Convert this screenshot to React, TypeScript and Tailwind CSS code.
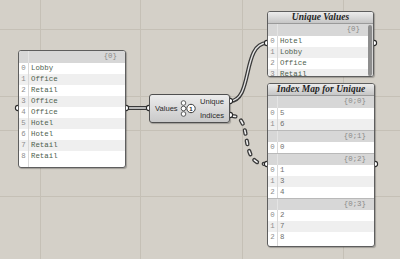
import React from "react";

type Group = { path: string; items: string[] };

const mono = "font-['Liberation_Mono','DejaVu_Sans_Mono',monospace]";

function Row({ i, v, odd, numeric }: { i: number; v: string; odd: boolean; numeric?: boolean }) {
  return (
    <div className={`flex h-[11px] shrink-0 items-center ${odd ? "bg-[#efefef]" : "bg-white"}`}>
      <div className="w-[10px] h-full border-r border-[#d9d9d9] text-[#8d8d8d] flex items-center justify-center">
        {i}
      </div>
      <div className={`pl-[2px] ${numeric ? "text-[#6f6f6f]" : "text-[#4e614e]"}`}>{v}</div>
    </div>
  );
}

function PathHeader({ path, first }: { path: string; first?: boolean }) {
  return (
    <div
      className={`flex h-[12px] shrink-0 items-center bg-[#d7d7d7] ${first ? "" : "border-t border-[#b9b9b9]"}`}
    >
      <div className="w-[10px] h-full border-r border-[#e4e4e4]" />
      <div className="flex-1 text-right pr-[8px] text-[#8a8a8a]">{path}</div>
    </div>
  );
}

function Panel({
  className,
  title,
  groups,
  numeric,
  scroll,
}: {
  className: string;
  title?: string;
  groups: Group[];
  numeric?: boolean;
  scroll?: boolean;
}) {
  return (
    <div
      className={`absolute flex flex-col overflow-hidden rounded-[3px] border border-[#5e5e5e] bg-white shadow-[1px_1px_1px_rgba(0,0,0,0.25)] ${className}`}
    >
      {title && (
        <div className="h-[12px] shrink-0 flex items-center justify-center border-b border-[#9a9a9a] bg-gradient-to-b from-[#ececec] to-[#c6c6c6] font-['Liberation_Serif',serif] font-bold italic text-[9.5px] text-[#1f1f1f] leading-none">
          {title}
        </div>
      )}
      <div className="flex flex-1 min-h-0">
        <div className={`flex flex-1 flex-col min-w-0 ${mono} text-[7.4px] leading-none`}>
          {groups.map((g, gi) => (
            <React.Fragment key={g.path}>
              <PathHeader path={g.path} first={gi === 0} />
              {g.items.map((v, i) => (
                <Row key={i} i={i} v={v} odd={i % 2 === 1} numeric={numeric} />
              ))}
            </React.Fragment>
          ))}
          <div className="flex flex-1">
            <div className="w-[10px] border-r border-[#d9d9d9]" />
          </div>
        </div>
        {scroll && (
          <div className="w-[5px] shrink-0 bg-[#d7d7d7] flex flex-col pt-[1px] pr-[1px]">
            <div className="flex-1 rounded-[2px] bg-[#8e8e8e]" />
          </div>
        )}
      </div>
    </div>
  );
}

function GripL({ x, y }: { x: number; y: number }) {
  return (
    <path
      d={`M${x},${y - 2.6} A2.6,2.6 0 0,0 ${x},${y + 2.6}`}
      fill="#fff"
      stroke="#2a2a2a"
      strokeWidth="1.1"
    />
  );
}

function GripR({ x, y }: { x: number; y: number }) {
  return (
    <path
      d={`M${x},${y - 2.6} A2.6,2.6 0 0,1 ${x},${y + 2.6}`}
      fill="#fff"
      stroke="#2a2a2a"
      strokeWidth="1.1"
    />
  );
}

export default function App() {
  const wire1 = "M126,108 L149,108";
  const wire2 = "M230,101 C253,101 242,43 267,43";
  const wire3 = "M232,116 C254,116 238,164 265,164";

  return (
    <div className="relative w-[400px] h-[259px] overflow-hidden bg-[#d4d0c8]">
      <svg className="absolute inset-0" width="400" height="259">
        <g stroke="#c5c0b6" strokeWidth="1">
          <line x1="40.5" y1="0" x2="40.5" y2="259" />
          <line x1="140.5" y1="0" x2="140.5" y2="259" />
          <line x1="242.5" y1="0" x2="242.5" y2="259" />
          <line x1="343.5" y1="0" x2="343.5" y2="259" />
          <line x1="0" y1="29.5" x2="400" y2="29.5" />
          <line x1="0" y1="96.5" x2="400" y2="96.5" />
          <line x1="0" y1="130.5" x2="400" y2="130.5" />
          <line x1="0" y1="196.5" x2="400" y2="196.5" />
        </g>
        <g fill="none" strokeLinecap="round">
          <path d={wire1} stroke="#3a3a3a" strokeWidth="4" />
          <path d={wire1} stroke="#e4e4e4" strokeWidth="1.4" />
          <path d={wire2} stroke="#3a3a3a" strokeWidth="4" />
          <path d={wire2} stroke="#e4e4e4" strokeWidth="1.4" />
          <path d={wire3} stroke="#3a3a3a" strokeWidth="4.2" strokeDasharray="3.5 7" />
          <path d={wire3} stroke="#f2f2f2" strokeWidth="1.6" strokeDasharray="3.5 7" />
        </g>
      </svg>

      <Panel
        className="left-[18px] top-[50px] w-[108px] h-[118px]"
        groups={[
          {
            path: "{0}",
            items: ["Lobby", "Office", "Retail", "Office", "Office", "Hotel", "Hotel", "Retail", "Retail"],
          },
        ]}
      />

      <div className="absolute left-[149px] top-[94px] w-[81px] h-[29px] rounded-[3px] border border-[#4f4f4f] bg-gradient-to-b from-[#ececec] to-[#c9c9c9] shadow-[1px_1px_1px_rgba(0,0,0,0.25)] flex items-center font-['Liberation_Sans',Arial,sans-serif] text-[7.6px] text-[#2b2b2b] leading-none">
        <div className="pl-[5px] w-[30px]">Values</div>
        <svg width="18" height="20" viewBox="0 0 18 20" className="shrink-0">
          <g fill="#fff" stroke="#3a3a3a" strokeWidth="0.8">
            <circle cx="3.5" cy="4" r="2.3" />
            <circle cx="3.5" cy="9.5" r="2.3" />
            <circle cx="3.5" cy="15" r="2.3" />
            <circle cx="11" cy="9.5" r="4.2" strokeWidth="1" />
          </g>
          <text x="11" y="12" textAnchor="middle" fontSize="6" fontFamily="Liberation Sans, Arial, sans-serif" fontWeight="bold" fill="#222">
            1
          </text>
        </svg>
        <div className="flex flex-1 flex-col items-end gap-[6px] pr-[5px]">
          <div>Unique</div>
          <div>Indices</div>
        </div>
      </div>

      <Panel
        className="left-[267px] top-[11px] w-[107px] h-[66px]"
        title="Unique Values"
        scroll
        groups={[{ path: "{0}", items: ["Hotel", "Lobby", "Office", "Retail"] }]}
      />

      <Panel
        className="left-[267px] top-[83px] w-[108px] h-[164px]"
        title="Index Map for Unique"
        numeric
        groups={[
          { path: "{0;0}", items: ["5", "6"] },
          { path: "{0;1}", items: ["0"] },
          { path: "{0;2}", items: ["1", "3", "4"] },
          { path: "{0;3}", items: ["2", "7", "8"] },
        ]}
      />

      <svg className="absolute inset-0 pointer-events-none" width="400" height="259">
        <GripL x={18} y={108} />
        <GripR x={126} y={108} />
        <GripL x={149} y={108} />
        <GripR x={230} y={101} />
        <GripR x={230} y={115} />
        <GripL x={267} y={43} />
        <GripR x={374} y={43} />
        <GripL x={267} y={164} />
        <GripR x={375} y={164} />
      </svg>
    </div>
  );
}
